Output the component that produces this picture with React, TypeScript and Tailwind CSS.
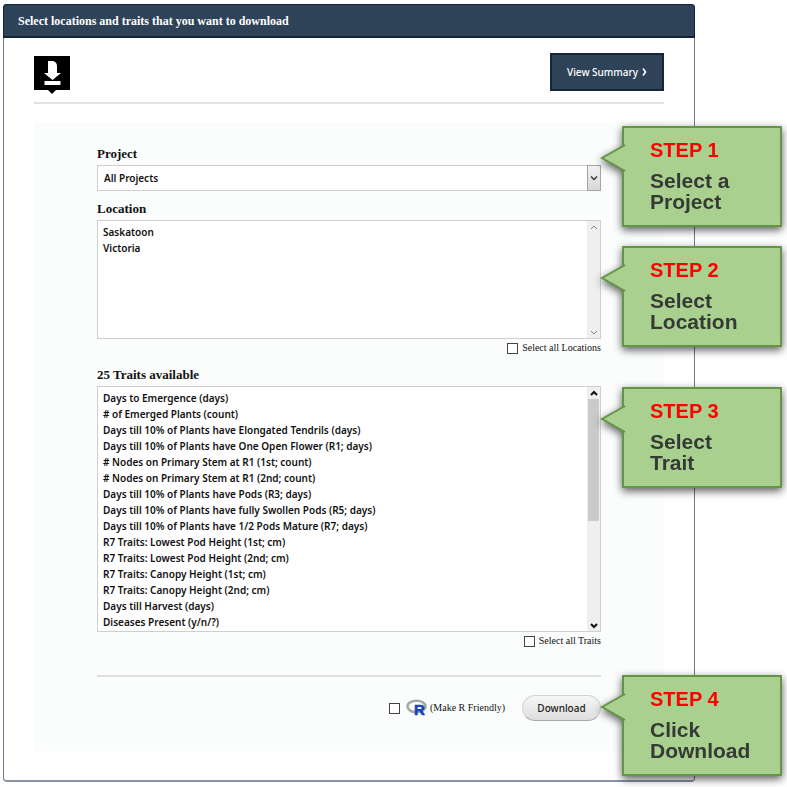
import type { ReactNode } from "react";

const serif = "font-['Liberation_Serif',serif]";
const sans = "font-['Noto_Sans','Open_Sans',sans-serif]";

const locations = ["Saskatoon", "Victoria"];

const traits = [
  "Days to Emergence (days)",
  "# of Emerged Plants (count)",
  "Days till 10% of Plants have Elongated Tendrils (days)",
  "Days till 10% of Plants have One Open Flower (R1; days)",
  "# Nodes on Primary Stem at R1 (1st; count)",
  "# Nodes on Primary Stem at R1 (2nd; count)",
  "Days till 10% of Plants have Pods (R3; days)",
  "Days till 10% of Plants have fully Swollen Pods (R5; days)",
  "Days till 10% of Plants have 1/2 Pods Mature (R7; days)",
  "R7 Traits: Lowest Pod Height (1st; cm)",
  "R7 Traits: Lowest Pod Height (2nd; cm)",
  "R7 Traits: Canopy Height (1st; cm)",
  "R7 Traits: Canopy Height (2nd; cm)",
  "Days till Harvest (days)",
  "Diseases Present (y/n/?)",
];

function Callout({ step, place, children }: { step: number; place: string; children: ReactNode }) {
  return (
    <aside
      className={`absolute left-full z-10 ml-[21px] h-[101px] w-[160px] border-2 border-[#649545] bg-[#a9d08e] pt-3 pl-[26px] font-['Liberation_Sans',Arial,sans-serif] font-bold drop-shadow-[0_3px_4px_rgba(0,0,0,0.65)] ${place}`}
    >
      <svg className="absolute top-[15px] -left-6 h-[30px] w-[26px]" viewBox="0 0 26 30" aria-hidden="true">
        <path d="M26 1 L25 2 L2 15 L25 28 L26 29 Z" fill="#a9d08e" />
        <path d="M25 2 L2 15 L25 28" fill="none" stroke="#649545" strokeWidth="2" />
      </svg>
      <h2 className="text-xl leading-5 text-[#ff0000]">STEP {step}</h2>
      <p className="mt-[10px] text-[21px] leading-[21px] text-[#363a36]">{children}</p>
    </aside>
  );
}

function ScrollBar({ active }: { active?: boolean }) {
  const stroke = active ? "#111" : "#888";
  const width = active ? 2 : 1;
  return (
    <div className="flex w-[13px] shrink-0 flex-col items-center bg-[#efefef]" aria-hidden="true">
      <svg className="h-3 w-3 shrink-0" viewBox="0 0 12 12">
        <path d="M3 8 L6 5 L9 8" fill="none" stroke={stroke} strokeWidth={width} />
      </svg>
      <div className={active ? "h-1/2 w-[11px] bg-[#cacaca]" : "h-0"} />
      <svg className="mt-auto h-3 w-3 shrink-0" viewBox="0 0 12 12">
        <path d="M3 5 L6 8 L9 5" fill="none" stroke={stroke} strokeWidth={width} />
      </svg>
    </div>
  );
}

function ListBox({ id, items, height, active }: { id: string; items: string[]; height: string; active?: boolean }) {
  return (
    <div className={`mt-[3px] flex border border-[#cfcfcf] bg-white ${height}`}>
      <select
        id={id}
        multiple
        className={`h-full min-w-0 flex-1 overflow-y-auto pt-1 text-[10px] text-[#111] outline-none [scrollbar-width:none] ${sans}`}
      >
        {items.map((item) => (
          <option key={item} className="h-4 min-h-4 px-[5px] py-0 leading-4 font-semibold">
            {item}
          </option>
        ))}
      </select>
      <ScrollBar active={active} />
    </div>
  );
}

function FieldLabel({ htmlFor, children }: { htmlFor: string; children: ReactNode }) {
  return (
    <label htmlFor={htmlFor} className={`block text-[13px] leading-4 font-bold text-[#111] ${serif}`}>
      {children}
    </label>
  );
}

function Check({ id, children }: { id: string; children: ReactNode }) {
  return (
    <div className="flex items-center gap-1">
      <input
        id={id}
        type="checkbox"
        className="size-[11px] appearance-none border border-[#444] bg-white checked:bg-[#2f4358]"
      />
      <label htmlFor={id} className={`flex items-center gap-[2px] text-[10px] leading-4 text-[#111] ${serif}`}>
        {children}
      </label>
    </div>
  );
}

function RLogo() {
  return (
    <svg className="ml-[2px] h-[22px] w-[22px]" viewBox="0 0 22 22" aria-hidden="true">
      <ellipse cx="10.500" cy="9.500" rx="9" ry="5.800" fill="none" stroke="#a5a8ad" strokeWidth="2.600" />
      <text
        x="8"
        y="18"
        fontSize="15"
        fontWeight="bold"
        fontFamily="Liberation Sans, Arial, sans-serif"
        fill="#1444b0"
        stroke="#1444b0"
        strokeWidth="0.600"
      >
        R
      </text>
    </svg>
  );
}

export default function App() {
  return (
    <div className="min-h-screen bg-white pt-1 pb-[5px] pr-[92px] pl-[3px]">
      <main className="rounded-[4px] border border-b-2 border-[#6b7b8e] border-b-[#8793a5]">
        <header className="-mx-px -mt-px flex h-[34px] items-center rounded-t-[4px] border border-b-2 border-[#13233b] bg-[#2f4358] px-[14px]">
          <h1 className={`text-xs leading-4 font-bold text-white ${serif}`}>
            Select locations and traits that you want to download
          </h1>
        </header>

        <div className="px-[30px] pt-[15px] pb-[29px]">
          <div className="flex items-start justify-between border-b-2 border-[#e2e2e2] pb-2">
            <svg className="mt-[3px] h-[38px] w-[36px]" viewBox="0 0 36 38" aria-hidden="true">
              <path d="M0 0 H36 V34 H22 L18 38 L14 34 H0 Z" fill="#000" />
              <path d="M14 5 H19 Q23 6 23 10 V17 H27 L18.500 24 L10 17 H14 Z" fill="#fff" />
              <path d="M10.500 25 H26.500 V29 H10.500 Z" fill="#fff" />
            </svg>
            <button
              type="button"
              className={`flex h-[38px] w-[114px] items-center justify-center gap-1 border-2 border-[#15263d] bg-[#2f4358] text-[10px] font-medium text-white ${sans}`}
            >
              View Summary
              <svg className="h-2 w-[5px]" viewBox="0 0 5 8" aria-hidden="true">
                <path d="M1 0.500 L3.500 4 L1 7.500" fill="none" stroke="#fff" strokeWidth="1.600" />
              </svg>
            </button>
          </div>

          <form className="mt-[18px] bg-[#fbfdfc] px-[63px] pt-6 pb-[30px]" onSubmit={(e) => e.preventDefault()}>
            <section className="relative">
              <FieldLabel htmlFor="project">Project</FieldLabel>
              <div className="relative mt-[3px]">
                <select
                  id="project"
                  className={`block h-[26px] w-full appearance-none border border-[#cfcfcf] bg-white px-[6px] text-[10px] font-semibold text-[#111] ${sans}`}
                >
                  <option>All Projects</option>
                </select>
                <span className="pointer-events-none absolute top-0 right-0 flex h-full w-[14px] items-center justify-center border border-[#a5a5a5] bg-gradient-to-b from-[#f2f2f2] to-[#d8d8d8]">
                  <svg className="h-2 w-2" viewBox="0 0 8 8" aria-hidden="true">
                    <path d="M1 2.500 L4 5.500 L7 2.500" fill="none" stroke="#333" strokeWidth="1.300" />
                  </svg>
                </span>
              </div>
              <Callout step={1} place="-top-5">
                Select a<br />
                Project
              </Callout>
            </section>

            <section className="relative mt-[10px]">
              <FieldLabel htmlFor="location">Location</FieldLabel>
              <ListBox id="location" items={locations} height="h-[119px]" />
              <div className="flex h-[18px] items-center justify-end">
                <Check id="all-locations">Select all Locations</Check>
              </div>
              <Callout step={2} place="top-[45px]">
                Select
                <br />
                Location
              </Callout>
            </section>

            <section className="relative mt-[10px]">
              <FieldLabel htmlFor="traits">25 Traits available</FieldLabel>
              <ListBox id="traits" items={traits} height="h-[246px]" active />
              <div className="flex h-[18px] items-center justify-end">
                <Check id="all-traits">Select all Traits</Check>
              </div>
              <Callout step={3} place="top-5">
                Select
                <br />
                Trait
              </Callout>
            </section>

            <section className="relative mt-[25px] flex items-center justify-end gap-[17px] border-t-2 border-[#dfdfdf] pt-[18px]">
              <Check id="r-friendly">
                <RLogo />
                (Make R Friendly)
              </Check>
              <button
                type="submit"
                className={`h-[26px] w-[79px] rounded-full border border-[#d2d2d2] border-b-[#aaa] bg-gradient-to-b from-[#f6f6f6] to-[#dedede] text-[10px] font-medium text-[#222] ${sans}`}
              >
                Download
              </button>
              <Callout step={4} place="-top-[2px]">
                Click
                <br />
                Download
              </Callout>
            </section>
          </form>
        </div>
      </main>
    </div>
  );
}
